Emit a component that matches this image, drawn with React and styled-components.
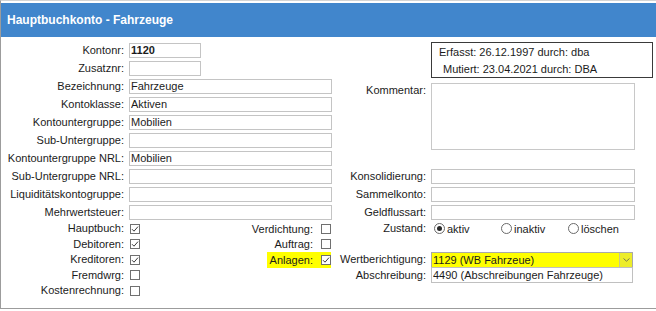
import React from "react"
import styled, { createGlobalStyle } from "styled-components"

const GlobalStyle = createGlobalStyle`
	html, body {
		margin: 0;
		padding: 0;
		background: #fff;
	}

	body {
		font-family: "Liberation Sans", Arial, sans-serif;
		font-size: 11px;
		color: #1b1b1b;
	}
`

const Frame = styled.div`
	width: 656px;
	height: 309px;
	box-sizing: border-box;
	border-top: 1px solid #d4d4d4;
	border-left: 1px solid #9c9c9c;
	border-bottom: 1px solid #9c9c9c;
	padding-top: 2px;
`

const Header = styled.div`
	height: 34px;
	line-height: 34px;
	padding-left: 6px;
	background: #4186cc;
	color: #fff;
	font-size: 12px;
	font-weight: bold;
`

const Form = styled.div`
	display: grid;
	grid-template-columns: 122px 203px 89px 222px;
	grid-template-rows: repeat(10, 18px) repeat(5, 15.5px);
	column-gap: 5px;
	padding: 4px 0 0 1px;
`

const Label = styled.label`
	grid-row: ${p => p.$row};
	grid-column: ${p => p.$col};
	align-self: ${p => (p.$top ? "start" : "center")};
	margin-top: ${p => (p.$top ? "7px" : "0")};
	text-align: right;
	white-space: nowrap;
	line-height: 13px;
`

const Field = styled.input`
	grid-row: ${p => p.$row};
	grid-column: ${p => p.$col};
	align-self: center;
	width: ${p => p.$w}px;
	height: 15px;
	box-sizing: border-box;
	margin: 0;
	padding: 0 1px;
	border: 1px solid #c4c4c4;
	border-radius: 0;
	outline: none;
	background: #fff;
	font-family: inherit;
	font-size: 11px;
	font-weight: ${p => (p.$bold ? "bold" : "normal")};
	color: #1b1b1b;
`

const InfoBox = styled.div`
	grid-row: 1 / span 2;
	grid-column: 4;
	align-self: start;
	margin-top: 1px;
	height: 36px;
	box-sizing: border-box;
	border: 1px solid #3a3a3a;
	padding-top: 1px;
	line-height: 17px;
	white-space: nowrap;
`

const InfoLine = styled.div`
	padding-left: ${p => p.$indent}px;
`

const Comment = styled.textarea`
	grid-row: 3 / span 5;
	grid-column: 4;
	align-self: start;
	margin: 6px 0 0;
	width: 204px;
	height: 67px;
	box-sizing: border-box;
	border: 1px solid #c8c8c8;
	resize: none;
	outline: none;
	font-family: inherit;
`

const CheckCell = styled.div`
	grid-row: ${p => p.$row};
	grid-column: 2;
	display: flex;
	align-items: stretch;
`

const MidGroup = styled.span`
	margin-left: auto;
	margin-right: 1px;
	display: flex;
	align-items: center;
	gap: 8px;
	padding-left: 3px;
	background: ${p => (p.$highlight ? "#ffff00" : "transparent")};
`

const Box = styled.span`
	align-self: center;
	width: 10px;
	height: 10px;
	box-sizing: border-box;
	margin-left: ${p => p.$ml || 0}px;
	border: 1px solid #707070;
	background: #fff;
	display: flex;
	align-items: center;
	justify-content: center;
`

const Check = ({ checked, ml }) => (
	<Box $ml={ml}>
		{checked && (
			<svg width="8" height="8" viewBox="0 0 8 8">
				<path d="M1 4.2 L3 6.2 L7 1.6" fill="none" stroke="#3a3a3a" strokeWidth="1" />
			</svg>
		)}
	</Box>
)

const RadioGroup = styled.div`
	grid-row: 11;
	grid-column: 4;
	display: flex;
	align-items: center;
	padding-left: 3px;
`

const RadioOption = styled.span`
	width: 67px;
	display: flex;
	align-items: center;
	gap: 2px;
`

const Circle = styled.span`
	width: 11px;
	height: 11px;
	box-sizing: border-box;
	border-radius: 50%;
	border: 1px solid #6a6a6a;
	background: #fff;
	display: flex;
	align-items: center;
	justify-content: center;

	&::after {
		content: "";
		width: 5px;
		height: 5px;
		border-radius: 50%;
		background: ${p => (p.$on ? "#2a2a2a" : "transparent")};
	}
`

const Select = styled.div`
	grid-row: 13;
	grid-column: 4;
	align-self: end;
	width: 202px;
	height: 16px;
	box-sizing: border-box;
	border: 1px solid #a9a9a9;
	background: #ffff00;
	display: flex;
	align-items: center;
	padding-left: 1px;
	line-height: 14px;
`

const SelectText = styled.span`
	flex: 1;
`

const Arrow = styled.span`
	width: 13px;
	height: 14px;
	box-sizing: border-box;
	border-left: 1px solid #c9c98a;
	background: #eded2a;
	display: flex;
	align-items: center;
	justify-content: center;
`

const Below = styled(Field)`
	align-self: start;
	height: 16px;
	margin-top: -1px;
	border-color: #c0c0c0;
`

const leftFields = [
	{ label: "Kontonr:", value: "1120", w: 72, bold: true },
	{ label: "Zusatznr:", value: "", w: 72 },
	{ label: "Bezeichnung:", value: "Fahrzeuge", w: 203 },
	{ label: "Kontoklasse:", value: "Aktiven", w: 203 },
	{ label: "Kontountergruppe:", value: "Mobilien", w: 203 },
	{ label: "Sub-Untergruppe:", value: "", w: 203 },
	{ label: "Kontountergruppe NRL:", value: "Mobilien", w: 203 },
	{ label: "Sub-Untergruppe NRL:", value: "", w: 203 },
	{ label: "Liquiditätskontogruppe:", value: "", w: 203 },
	{ label: "Mehrwertsteuer:", value: "", w: 203 },
]

const rightFields = [
	{ row: 8, label: "Konsolidierung:" },
	{ row: 9, label: "Sammelkonto:" },
	{ row: 10, label: "Geldflussart:" },
]

const checks = [
	{ label: "Hauptbuch:", on: true, mid: { label: "Verdichtung:", on: false } },
	{ label: "Debitoren:", on: true, mid: { label: "Auftrag:", on: false } },
	{ label: "Kreditoren:", on: true, mid: { label: "Anlagen:", on: true, highlight: true } },
	{ label: "Fremdwrg:", on: false },
	{ label: "Kostenrechnung:", on: false },
]

const App = () => {
	return (
		<>
			<GlobalStyle />
			<Frame>
				<Header>Hauptbuchkonto - Fahrzeuge</Header>
				<Form>
					{leftFields.map((f, i) => (
						<React.Fragment key={f.label}>
							<Label $row={i + 1} $col={1}>{f.label}</Label>
							<Field $row={i + 1} $col={2} $w={f.w} $bold={f.bold} readOnly defaultValue={f.value} />
						</React.Fragment>
					))}

					<InfoBox>
						<InfoLine $indent={7}>Erfasst: 26.12.1997 durch: dba</InfoLine>
						<InfoLine $indent={11}>Mutiert: 23.04.2021 durch: DBA</InfoLine>
					</InfoBox>

					<Label $row="3 / span 2" $col={3} $top>Kommentar:</Label>
					<Comment readOnly />

					{rightFields.map(f => (
						<React.Fragment key={f.label}>
							<Label $row={f.row} $col={3}>{f.label}</Label>
							<Field $row={f.row} $col={4} $w={204} readOnly defaultValue="" />
						</React.Fragment>
					))}

					{checks.map((c, i) => (
						<React.Fragment key={c.label}>
							<Label $row={i + 11} $col={1}>{c.label}</Label>
							<CheckCell $row={i + 11}>
								<Check checked={c.on} ml={1} />
								{c.mid && (
									<MidGroup $highlight={c.mid.highlight}>
										<span>{c.mid.label}</span>
										<Check checked={c.mid.on} />
									</MidGroup>
								)}
							</CheckCell>
						</React.Fragment>
					))}

					<Label $row={11} $col={3}>Zustand:</Label>
					<RadioGroup>
						<RadioOption><Circle $on />aktiv</RadioOption>
						<RadioOption><Circle />inaktiv</RadioOption>
						<RadioOption><Circle />löschen</RadioOption>
					</RadioGroup>

					<Label $row={13} $col={3}>Wertberichtigung:</Label>
					<Select>
						<SelectText>1129 (WB Fahrzeue)</SelectText>
						<Arrow>
							<svg width="7" height="4" viewBox="0 0 7 4">
								<path d="M0.5 0.5 L3.5 3.2 L6.5 0.5" fill="none" stroke="#7a7a50" strokeWidth="1" />
							</svg>
						</Arrow>
					</Select>

					<Label $row={14} $col={3}>Abschreibung:</Label>
					<Below $row={14} $col={4} $w={202} readOnly defaultValue="4490 (Abschreibungen Fahrzeuge)" />
				</Form>
			</Frame>
		</>
	)
}

export default App
